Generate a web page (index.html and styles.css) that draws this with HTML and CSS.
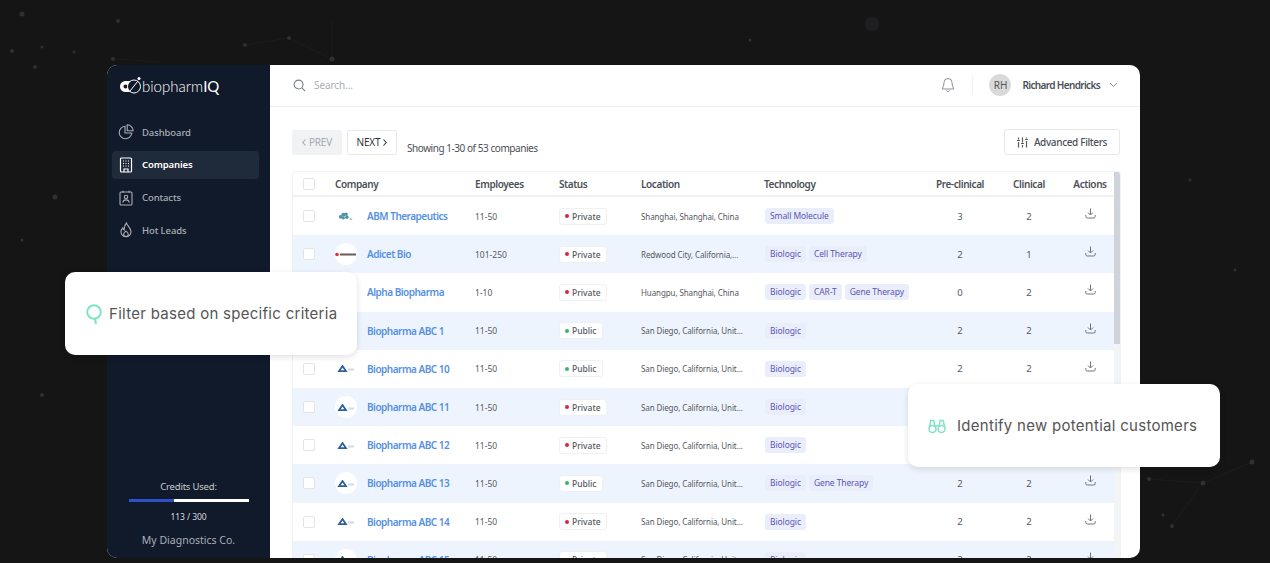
FILE: index.html
```html
<!DOCTYPE html>
<html>
  <head>
    <meta charset="utf-8">
    <title>biopharmIQ</title>
    <link rel="stylesheet" href="styles.css">
  </head>
  <body>
    <svg class="bg-dots" width="1270" height="563" viewBox="0 0 1270 563">
      <g stroke="#1c1c1e" stroke-width="1" fill="none">
        <path d="M332 59L289 38L245 45M332 59L332 20M113 59L160 62M1149 479L1203 483L1172 526M1203 483L1252 462"/>
      </g>
      <g fill="#303032">
        <circle cx="872" cy="24" r="7" fill="#1f1f21"/><circle cx="22" cy="14" r="2.5"/><circle cx="118" cy="21" r="2"/>
        <circle cx="12" cy="51" r="2"/><circle cx="113" cy="59" r="2"/><circle cx="245" cy="45" r="2"/>
        <circle cx="289" cy="38" r="2"/><circle cx="332" cy="59" r="2.5"/><circle cx="35" cy="67" r="2"/>
        <circle cx="74" cy="52" r="1.5"/><circle cx="42" cy="47" r="1.5"/><circle cx="55" cy="197" r="2.5"/>
        <circle cx="22" cy="240" r="1.5"/><circle cx="42" cy="395" r="2"/><circle cx="1190" cy="180" r="1.5"/>
        <circle cx="1252" cy="462" r="2.5"/><circle cx="1203" cy="483" r="2.5"/><circle cx="1172" cy="526" r="2"/>
        <circle cx="1163" cy="515" r="1.5"/><circle cx="1149" cy="479" r="2"/><circle cx="1235" cy="270" r="1.5"/>
        <circle cx="750" cy="40" r="1.5"/>
      </g>
    </svg>

    <div class="app">
      <div class="sidebar">
        <div class="logo">
          <svg width="22" height="20" viewBox="0 0 22 20"><rect x="0" y="5" width="17" height="11" rx="5.5" fill="#fff"/><circle cx="5.5" cy="10.5" r="2" fill="#111a2b"/><circle cx="14" cy="10.5" r="6.5" fill="#111a2b" stroke="#fff" stroke-width="1"/><path d="M10 15L18 5" stroke="#fff" stroke-width="1"/><circle cx="19" cy="2.5" r="1.5" fill="#fff"/></svg>
          <span class="logo-text">biopharm<b>IQ</b></span>
        </div>
        <div class="nav">
          <div class="nav-item">
            <svg width="16" height="16" viewBox="0 0 16 16" fill="none" stroke="currentColor" stroke-width="1.1"><path d="M7 2.2a6.3 6.3 0 1 0 6.8 6.8H7z"/><path d="M9.2 0.8a6.2 6.2 0 0 1 6 6H9.2z"/></svg>
            <span>Dashboard</span>
          </div>
          <div class="nav-item active">
            <svg width="16" height="16" viewBox="0 0 16 16" fill="none" stroke="currentColor" stroke-width="1.2"><rect x="2.5" y="1" width="11" height="14" rx="1"/><path d="M5 4h1M7.5 4h1M10 4h1M5 6.5h1M7.5 6.5h1M10 6.5h1M5 9h1M7.5 9h1M10 9h1M6 15v-3h4v3"/></svg>
            <span>Companies</span>
          </div>
          <div class="nav-item">
            <svg width="16" height="16" viewBox="0 0 16 16" fill="none" stroke="currentColor" stroke-width="1.1"><rect x="2" y="2" width="12" height="13" rx="1"/><path d="M5 0.8v2M11 0.8v2"/><circle cx="8" cy="7" r="1.7"/><path d="M4.8 12.5c.3-2 1.5-2.6 3.2-2.6s2.9.6 3.2 2.6"/></svg>
            <span>Contacts</span>
          </div>
          <div class="nav-item">
            <svg width="16" height="16" viewBox="0 0 16 16" fill="none" stroke="currentColor" stroke-width="1.1"><path d="M8.5 1c.4 2.6 4.5 4.6 4.5 8.8a5 5 0 0 1-10 0c0-1.8.8-3 1.8-4 .2 1.2.7 1.8 1.4 2.2C6 5.5 6.8 2.8 8.5 1z"/><path d="M8 14.5a2.3 2.3 0 0 1-2.3-2.3c0-1.3 1.3-2 2.3-3.2 1 1.2 2.3 1.9 2.3 3.2A2.3 2.3 0 0 1 8 14.5z"/></svg>
            <span>Hot Leads</span>
          </div>
        </div>
        <div class="credits">
          <div class="credits-label">Credits Used:</div>
          <div class="credits-bar"><div class="credits-fill" style="width: 37.7%"></div></div>
          <div class="credits-count">113 / 300</div>
          <div class="org">My Diagnostics Co.</div>
        </div>
      </div>

      <div class="main">
        <div class="topbar">
          <svg width="13" height="13" viewBox="0 0 14 14" fill="none" stroke="#7b8087" stroke-width="1.2"><circle cx="6" cy="6" r="4.8"/><path d="M9.6 9.6L13 13"/></svg>
          <span class="search">Search...</span>
          <svg width="14" height="16" viewBox="0 0 14 16" fill="none" stroke="#8b9097" stroke-width="1"><path d="M7 1.5a4 4 0 0 0-4 4c0 4-1.8 5.5-1.8 6.5h11.6c0-1-1.8-2.5-1.8-6.5a4 4 0 0 0-4-4z"/><path d="M5.5 13.5a1.6 1.6 0 0 0 3 0"/></svg>
          <div class="divider"></div>
          <div class="avatar">RH</div>
          <span class="user">Richard Hendricks</span>
          <svg width="9" height="6" viewBox="0 0 9 6" fill="none" stroke="#8b9097" stroke-width="1"><path d="M1 1l3.5 3.5L8 1"/></svg>
        </div>

        <div class="toolbar">
          <div class="btn btn-off"><svg width="4" height="7" viewBox="0 0 4 7" fill="none" stroke="#a5a9af" stroke-width="1.1"><path d="M3.5 0.5L0.8 3.5l2.7 3"/></svg>PREV</div>
          <div class="btn">NEXT<svg width="4" height="7" viewBox="0 0 4 7" fill="none" stroke="#333" stroke-width="1.1"><path d="M0.5 0.5l2.7 3-2.7 3"/></svg></div>
          <span class="showing">Showing 1-30 of 53 companies</span>
          <div class="btn btn-filters">
            <svg width="11" height="11" viewBox="0 0 11 11" fill="none" stroke="#555b63" stroke-width="1.2"><path d="M1.5 0.5v2M1.5 5v5.5M5.5 0.5v5M5.5 8v2.5M9.5 0.5v1M9.5 4v6.5M0 3.5h3M4 6.5h3M8 2.5h3"/></svg>
            Advanced Filters
          </div>
        </div>

        <div class="table-wrap">
          <div class="table">
            <div class="row head">
              <div class="check"></div><div>Company</div><div>Employees</div><div>Status</div><div>Location</div><div>Technology</div>
              <div class="num">Pre-clinical</div><div class="num">Clinical</div><div class="num">Actions</div>
            </div>
            <div id="rows"></div>
          </div>
          <div class="scroll"><div class="scroll-thumb"></div></div>
        </div>
      </div>
    </div>

    <div class="callout callout-filter">
      <svg width="18" height="22" viewBox="0 0 18 22" fill="none" stroke="#7fe3c4" stroke-width="2"><circle cx="9" cy="9" r="6.8"/><path d="M10 16l1 5"/></svg>
      <span>Filter based on specific criteria</span>
    </div>
    <div class="callout callout-customers">
      <svg width="18" height="16" viewBox="0 0 18 16" fill="none" stroke="#7fe3c4" stroke-width="1.5"><circle cx="4.5" cy="11" r="3.5"/><circle cx="13.5" cy="11" r="3.5"/><path d="M1.2 10L2.8 2.5h3L7 9M16.8 10L15.2 2.5h-3L11 9M7.5 8h3"/></svg>
      <span>Identify new potential customers</span>
    </div>

    <script src="app.js"></script>
  </body>
</html>
```

FILE: app.js
```js
var rows = [
  ["abm", "ABM Therapeutics", "11-50", "Private", "Shanghai, Shanghai, China", ["Small Molecule"], 3, 2],
  ["adicet", "Adicet Bio", "101-250", "Private", "Redwood City, California,...", ["Biologic", "Cell Therapy"], 2, 1],
  ["abc", "Alpha Biopharma", "1-10", "Private", "Huangpu, Shanghai, China", ["Biologic", "CAR-T", "Gene Therapy"], 0, 2],
  ["abc", "Biopharma ABC 1", "11-50", "Public", "San Diego, California, Unit...", ["Biologic"], 2, 2],
  ["abc", "Biopharma ABC 10", "11-50", "Public", "San Diego, California, Unit...", ["Biologic"], 2, 2],
  ["abc", "Biopharma ABC 11", "11-50", "Private", "San Diego, California, Unit...", ["Biologic"], 2, 2],
  ["abc", "Biopharma ABC 12", "11-50", "Private", "San Diego, California, Unit...", ["Biologic"], 2, 2],
  ["abc", "Biopharma ABC 13", "11-50", "Public", "San Diego, California, Unit...", ["Biologic", "Gene Therapy"], 2, 2],
  ["abc", "Biopharma ABC 14", "11-50", "Private", "San Diego, California, Unit...", ["Biologic"], 2, 2],
  ["abc", "Biopharma ABC 15", "11-50", "Private", "San Diego, California, Unit...", ["Biologic"], 2, 2]
];

var logos = {
  abm: '<svg width="16" height="10" viewBox="0 0 18 10" fill="#4f93a8"><circle cx="3" cy="6" r="2"/><circle cx="6" cy="3.5" r="2.2"/><circle cx="9" cy="3" r="2"/><circle cx="10" cy="6.5" r="2"/><circle cx="6" cy="7" r="1.8"/><rect x="13" y="8" width="3" height="1"/></svg>',
  adicet: '<svg width="22" height="5" viewBox="0 0 22 5"><circle cx="2" cy="2.5" r="1.8" fill="#d8343f"/><rect x="5" y="1.5" width="16" height="2" fill="#6b5a5a"/></svg>',
  abc: '<svg width="18" height="7" viewBox="0 0 18 7"><path d="M5.5 1L9 6.2H2z" fill="none" stroke="#2f5f9e" stroke-width="1.8"/><rect x="11" y="3.5" width="6" height="2" fill="#d3dbe6"/></svg>'
};

var downloadIcon = '<svg width="11" height="11" viewBox="0 0 11 11" fill="none" stroke="#6f747b" stroke-width="1"><path d="M5.5 0.5v6M3 4.5l2.5 2.5L8 4.5M0.8 7v1.5a1.5 1.5 0 0 0 1.5 1.5h6.4a1.5 1.5 0 0 0 1.5-1.5V7"/></svg>';

var html = "";
for (var i = 0; i < rows.length; i++) {
  var r = rows[i];
  var tags = "";
  for (var j = 0; j < r[5].length; j++) {
    tags += '<span class="tag">' + r[5][j] + "</span>";
  }
  html += '<div class="row' + (i % 2 ? " alt" : "") + '">' +
    '<div class="check"></div>' +
    '<div class="company"><span class="logo-disc">' + logos[r[0]] + '</span><span class="company-name">' + r[1] + "</span></div>" +
    "<div>" + r[2] + "</div>" +
    '<div><span class="status"><i class="dot ' + r[3].toLowerCase() + '"></i>' + r[3] + "</span></div>" +
    '<div class="location">' + r[4] + "</div>" +
    '<div class="tags">' + tags + "</div>" +
    '<div class="num">' + r[6] + "</div>" +
    '<div class="num">' + r[7] + "</div>" +
    '<div class="num action">' + downloadIcon + "</div>" +
    "</div>";
}
document.getElementById("rows").innerHTML = html;
```

FILE: styles.css
```css
html, body {
  margin: 0;
  height: 563px;
  overflow: hidden;
}
body {
  position: relative;
  background-color: #151516;
  padding: 65px 0 0 107px;
  box-sizing: border-box;
  font-family: "Noto Sans", "Open Sans", sans-serif;
}
.bg-dots {
  position: absolute;
  top: 0;
  left: 0;
  filter: blur(0.6px);
}
.app {
  position: relative;
  display: flex;
  width: 1033px;
  height: 493px;
  border-radius: 10px;
  overflow: hidden;
  background-color: #fff;
}

/* sidebar */
.sidebar {
  display: flex;
  flex-direction: column;
  width: 163px;
  flex-shrink: 0;
  background-color: #111a2b;
  color: #a9aeb6;
}
.logo {
  display: flex;
  align-items: center;
  padding: 11px 0 0 13px;
  height: 20px;
  color: #fff;
}
.logo-text {
  font-family: "Lato", sans-serif;
  font-size: 15px;
  font-weight: 300;
  line-height: 20px;
}
.logo-text b {
  font-weight: 400;
}
.nav {
  display: flex;
  flex-direction: column;
  gap: 4.8px;
  margin: 22px 11px 0 5px;
}
.nav-item {
  display: flex;
  align-items: center;
  gap: 8px;
  height: 28px;
  padding-left: 6px;
  border-radius: 4px;
  font-size: 9.5px;
  font-weight: 500;
  letter-spacing: -0.1px;
}
.nav-item.active {
  background-color: #1f2a3a;
  color: #fff;
  font-weight: 600;
}
.credits {
  margin-top: auto;
  padding-bottom: 11px;
  text-align: center;
}
.credits-label {
  font-size: 9.5px;
  letter-spacing: -0.2px;
  line-height: 14px;
  color: #c9ccd1;
}
.credits-bar {
  width: 120px;
  height: 3px;
  margin: 5px auto 0 auto;
  background-color: #fff;
}
.credits-fill {
  height: 100%;
  background-color: #2f50c8;
}
.credits-count {
  margin-top: 9px;
  font-size: 8.5px;
  letter-spacing: -0.1px;
  line-height: 12px;
  color: #d8dade;
}
.org {
  margin-top: 10px;
  font-size: 10.5px;
  line-height: 14px;
  color: #a9aeb6;
}

/* top bar */
.main {
  flex: 1;
  display: flex;
  flex-direction: column;
  min-width: 0;
}
.topbar {
  display: flex;
  align-items: center;
  flex-shrink: 0;
  height: 40px;
  padding: 0 22px 1px 23px;
  border-bottom: 1px solid #eceef0;
}
.search {
  flex: 1;
  margin-left: 8px;
  font-size: 10px;
  letter-spacing: -0.1px;
  color: #a9adb3;
}
.divider {
  width: 1px;
  height: 18px;
  margin: 0 16px 0 17px;
  background-color: #eef0f2;
}
.avatar {
  width: 22px;
  height: 22px;
  border-radius: 50%;
  background-color: #d9d9d9;
  color: #555;
  font-size: 10px;
  line-height: 22px;
  text-align: center;
}
.user {
  margin: 0 9px 0 11px;
  font-size: 10px;
  font-weight: 600;
  letter-spacing: -0.65px;
  color: #4b5058;
}

/* toolbar */
.toolbar {
  display: flex;
  align-items: center;
  gap: 5px;
  flex-shrink: 0;
  padding: 22px 20px 0 22px;
  height: 26px;
}
.btn {
  display: flex;
  align-items: center;
  justify-content: center;
  gap: 3px;
  box-sizing: border-box;
  width: 50px;
  height: 25px;
  border: 1px solid #e6e8eb;
  border-radius: 2px;
  font-size: 10px;
  letter-spacing: -0.2px;
  color: #333;
}
.btn-off {
  background-color: #f1f2f4;
  border-color: #f1f2f4;
  color: #a5a9af;
}
.showing {
  flex: 1;
  margin: 11px 0 0 5px;
  font-size: 10px;
  letter-spacing: -0.45px;
  color: #4b5058;
}
.btn-filters {
  gap: 6px;
  width: 116px;
  height: 26px;
  border-radius: 3px;
  font-size: 10px;
  font-weight: 500;
  letter-spacing: -0.35px;
  color: #4b5058;
}

/* table */
.table-wrap {
  display: flex;
  margin: 16px 19px 0 22px;
  border: 1px solid #f0f1f3;
  border-bottom: 0;
  border-radius: 4px 4px 0 0;
  overflow: hidden;
}
.table {
  flex: 1;
  min-width: 0;
}
.scroll {
  width: 6px;
  background-color: #f3f4f6;
}
.scroll-thumb {
  height: 172px;
  background-color: #cfd3da;
}
.row {
  display: grid;
  grid-template-columns: 42px 140px 84px 82px 123px 171px 50px 88px 34px;
  align-items: center;
  height: 38.2px;
  font-size: 8.5px;
  color: #55595f;
}
.row.alt {
  background-color: #eef4fd;
}
.row.head {
  height: 23px;
  border-bottom: 2px solid #f0f1f3;
  font-size: 10px;
  font-weight: 600;
  letter-spacing: -0.4px;
  color: #4b5058;
}
.check {
  box-sizing: border-box;
  width: 12px;
  height: 12px;
  margin-left: 10px;
  border: 1px solid #e2e4e7;
  border-radius: 2px;
  background-color: #fff;
}
.company {
  display: flex;
  align-items: center;
  gap: 10px;
}
.logo-disc {
  display: flex;
  align-items: center;
  justify-content: center;
  width: 22px;
  height: 22px;
  flex-shrink: 0;
  border-radius: 50%;
  background-color: #fff;
}
.company-name {
  font-size: 10px;
  font-weight: 600;
  letter-spacing: -0.5px;
  color: #5590e4;
  white-space: nowrap;
}
.status {
  display: inline-flex;
  align-items: center;
  gap: 3px;
  height: 15px;
  padding: 0 5px;
  border: 1px solid #eef0f2;
  border-radius: 3px;
  background-color: #fff;
  font-weight: 500;
}
.dot {
  width: 4px;
  height: 4px;
  border-radius: 50%;
}
.dot.private {
  background-color: #d8263d;
}
.dot.public {
  background-color: #34b866;
}
.location {
  font-size: 8px;
  letter-spacing: -0.1px;
  white-space: nowrap;
}
.tags {
  display: flex;
  gap: 3px;
  margin-left: 1px;
}
.tag {
  padding: 2px 5px;
  border-radius: 3px;
  background-color: #eaeefb;
  color: #5a55b8;
  letter-spacing: -0.1px;
  line-height: 12px;
  white-space: nowrap;
}
.num {
  text-align: center;
  font-size: 9.5px;
  white-space: nowrap;
}
.row.head .num {
  font-size: 10px;
}
.action svg {
  display: block;
  margin: -5px auto 0 auto;
}

/* callouts over the table */
.callout {
  position: absolute;
  display: flex;
  align-items: center;
  box-sizing: border-box;
  height: 83px;
  border-radius: 10px;
  background-color: #fff;
  box-shadow: 0 2px 6px rgba(0, 0, 0, 0.12);
  font-family: "Inter", sans-serif;
  font-size: 15px;
  letter-spacing: 0.28px;
  color: #555;
}
.callout-filter {
  left: 65px;
  top: 272px;
  width: 292px;
  padding-left: 20px;
  gap: 6px;
}
.callout-customers {
  left: 908px;
  top: 384px;
  width: 312px;
  padding-left: 20px;
  gap: 11px;
}
```
